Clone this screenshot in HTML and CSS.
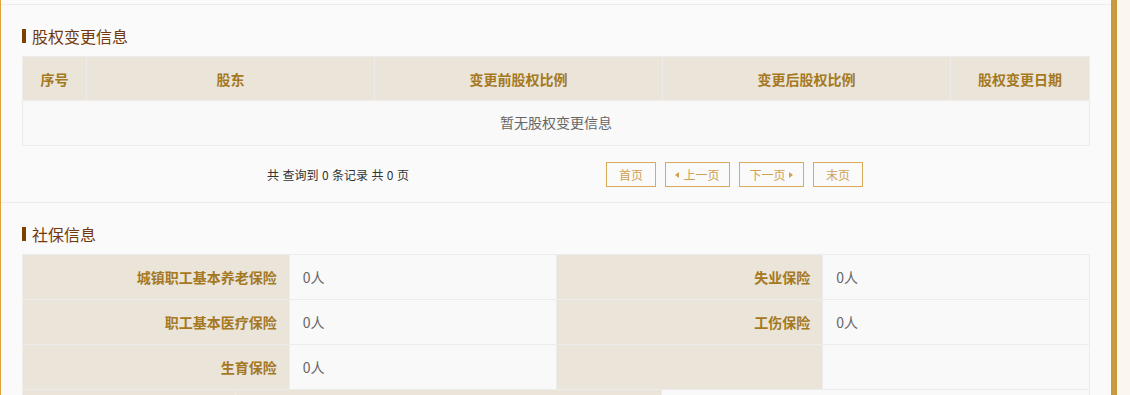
FILE: index.html
```html
<!DOCTYPE html>
<html>
	<head>
		<meta charset="UTF-8">
		<title>企业信息</title>
		<link rel="stylesheet" href="styles.css">
	</head>
	<body>
		<!--主内容区-->
		<div class="main">
			<!--股权变更信息-->
			<div class="section">
				<h3 class="sec-title">股权变更信息</h3>
				<table class="list-table">
					<colgroup>
						<col style="width: 64px">
						<col style="width: 288px">
						<col style="width: 288px">
						<col style="width: 288px">
						<col>
					</colgroup>
					<tr>
						<th>序号</th>
						<th>股东</th>
						<th>变更前股权比例</th>
						<th>变更后股权比例</th>
						<th>股权变更日期</th>
					</tr>
					<tr>
						<td colspan="5" class="empty">暂无股权变更信息</td>
					</tr>
				</table>
				<!--分页-->
				<div class="pager">
					<span class="pager-info">共 查询到 0 条记录 共 0 页</span>
					<div class="pager-btns">
						<a href="javascript:;" class="btn">首页</a>
						<a href="javascript:;" class="btn btn-prev">上一页</a>
						<a href="javascript:;" class="btn btn-next">下一页</a>
						<a href="javascript:;" class="btn">末页</a>
					</div>
				</div>
			</div>

			<!--社保信息-->
			<div class="section">
				<h3 class="sec-title">社保信息</h3>
				<table class="info-table">
					<tr>
						<th>城镇职工基本养老保险</th>
						<td>0人</td>
						<th>失业保险</th>
						<td>0人</td>
					</tr>
					<tr>
						<th>职工基本医疗保险</th>
						<td>0人</td>
						<th>工伤保险</th>
						<td>0人</td>
					</tr>
					<tr>
						<th>生育保险</th>
						<td>0人</td>
						<th></th>
						<td></td>
					</tr>
				</table>
				<table class="info-table next-table">
					<tr>
						<th class="c1">&nbsp;</th>
						<th class="c2">&nbsp;</th>
						<td>&nbsp;</td>
					</tr>
				</table>
			</div>
		</div>
	</body>
</html>
```

FILE: styles.css
```css
* {
	margin: 0;
	padding: 0;
}

body {
	background: #fbf7ee;
	font-family: "Noto Sans CJK SC", "Liberation Sans", sans-serif;
	font-size: 14px;
	color: #666;
}

.main {
	width: 1110px;
	background: #fafafa;
	border-left: 1px solid #e3a33a;
	border-right: 6px solid #c99a3c;
	padding-top: 4px;
}

.section {
	border-top: 1px solid #ececec;
	padding: 20px 21px 15px;
}

.sec-title {
	display: flex;
	align-items: center;
	height: 22px;
	margin-bottom: 9px;
	font-size: 16px;
	font-weight: normal;
	color: #73380c;
}

.sec-title::before {
	content: "";
	width: 4px;
	height: 14px;
	margin-right: 6px;
	background: #7f3f00;
}

table {
	width: 1068px;
	border-collapse: collapse;
	table-layout: fixed;
}

th,
td {
	border: 1px solid #ececec;
}

th {
	background: #eae4d9;
	color: #a57822;
	font-weight: bold;
}

.list-table th {
	height: 43px;
	text-align: center;
}

.list-table td {
	height: 41px;
	padding-bottom: 3px;
	text-align: center;
	background: #f9f9f9;
}

.pager {
	display: flex;
	align-items: center;
	margin-top: 16px;
	padding-left: 245px;
	font-size: 12px;
	color: #333;
}

.pager-info {
	word-spacing: 0.75px;
}

.pager-btns {
	display: flex;
	gap: 9px;
	margin-left: 197px;
}

.btn {
	display: flex;
	align-items: center;
	justify-content: center;
	gap: 4px;
	width: 50px;
	height: 25px;
	box-sizing: border-box;
	border: 1px solid #d9aa58;
	color: #d0a052;
	text-decoration: none;
}

.btn-prev,
.btn-next {
	width: 65px;
}

.btn-prev::before {
	content: "";
	border-top: 3px solid transparent;
	border-bottom: 3px solid transparent;
	border-right: 4px solid #d0a052;
}

.btn-next::after {
	content: "";
	border-top: 3px solid transparent;
	border-bottom: 3px solid transparent;
	border-left: 4px solid #d0a052;
}

.info-table th,
.info-table td {
	height: 44px;
}

.info-table th {
	text-align: right;
	padding-right: 12px;
}

.info-table td {
	text-align: left;
	padding-left: 13px;
	background: #f9f9f9;
}

.next-table {
	margin-top: -1px;
}

.next-table .c1 {
	width: 200px;
}

.next-table .c2 {
	width: 413px;
}
```
